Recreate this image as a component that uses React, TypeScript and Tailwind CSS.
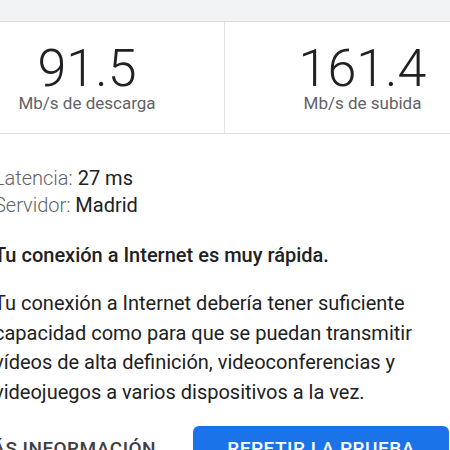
import React from "react";

const stats = [
  { value: "91.5", label: "Mb/s de descarga" },
  { value: "161.4", label: "Mb/s de subida" },
];

const App = () => {
  return (
    <div className="w-[450px] h-[450px] overflow-hidden bg-white font-['Roboto',sans-serif] text-[#202124]">
      <div className="h-[22px] bg-[#f1f3f4] border-b border-[#dadce0]" />
      {/* the screenshot is cropped: the real screen starts 50px to the left */}
      <div className="-ml-[50px] w-[550px]">
        <div className="flex h-[112px] border-b border-[#e3e3e3]">
          {stats.map((s, i) => (
            <div
              key={s.value}
              className={
                "w-[275px] shrink-0 flex flex-col items-center pt-[23px] " +
                (i === 0 ? "border-r border-[#e3e3e3]" : "")
              }
            >
              <div className="text-[52px] leading-[48px] font-light text-[#202124]">
                {s.value}
              </div>
              <div className="text-[17px] leading-[20px] text-[#5f6368]">
                {s.label}
              </div>
            </div>
          ))}
        </div>

        <div className="pl-[44px] pr-[51px]">
          <div className="mt-[31px] text-[20px] leading-[27px]">
            <div>
              <span className="font-light text-[#5f6368]">Latencia: </span>
              <span>27 ms</span>
            </div>
            <div>
              <span className="font-light text-[#5f6368]">Servidor: </span>
              <span>Madrid</span>
            </div>
          </div>

          <h2 className="mt-[23px] text-[20px] leading-[27px] font-medium">
            Tu conexión a Internet es muy rápida.
          </h2>

          <p className="mt-[20px] text-[20px] leading-[29.5px]">
            Tu conexión a Internet debería tener suficiente capacidad como para
            que se puedan transmitir vídeos de alta definición,
            videoconferencias y videojuegos a varios dispositivos a la vez.
          </p>

          <div className="mt-[19px] flex items-center justify-between">
            <button className="-ml-[19px] text-[19px] font-medium tracking-[0.5px] text-[#3c4043] uppercase">
              Más información
            </button>
            <button className="w-[256px] h-[46px] rounded-[6px] bg-[#1a73e8] text-white text-[19px] font-medium tracking-[0.5px] uppercase">
              Repetir la prueba
            </button>
          </div>
        </div>
      </div>
    </div>
  );
};

export default App;
